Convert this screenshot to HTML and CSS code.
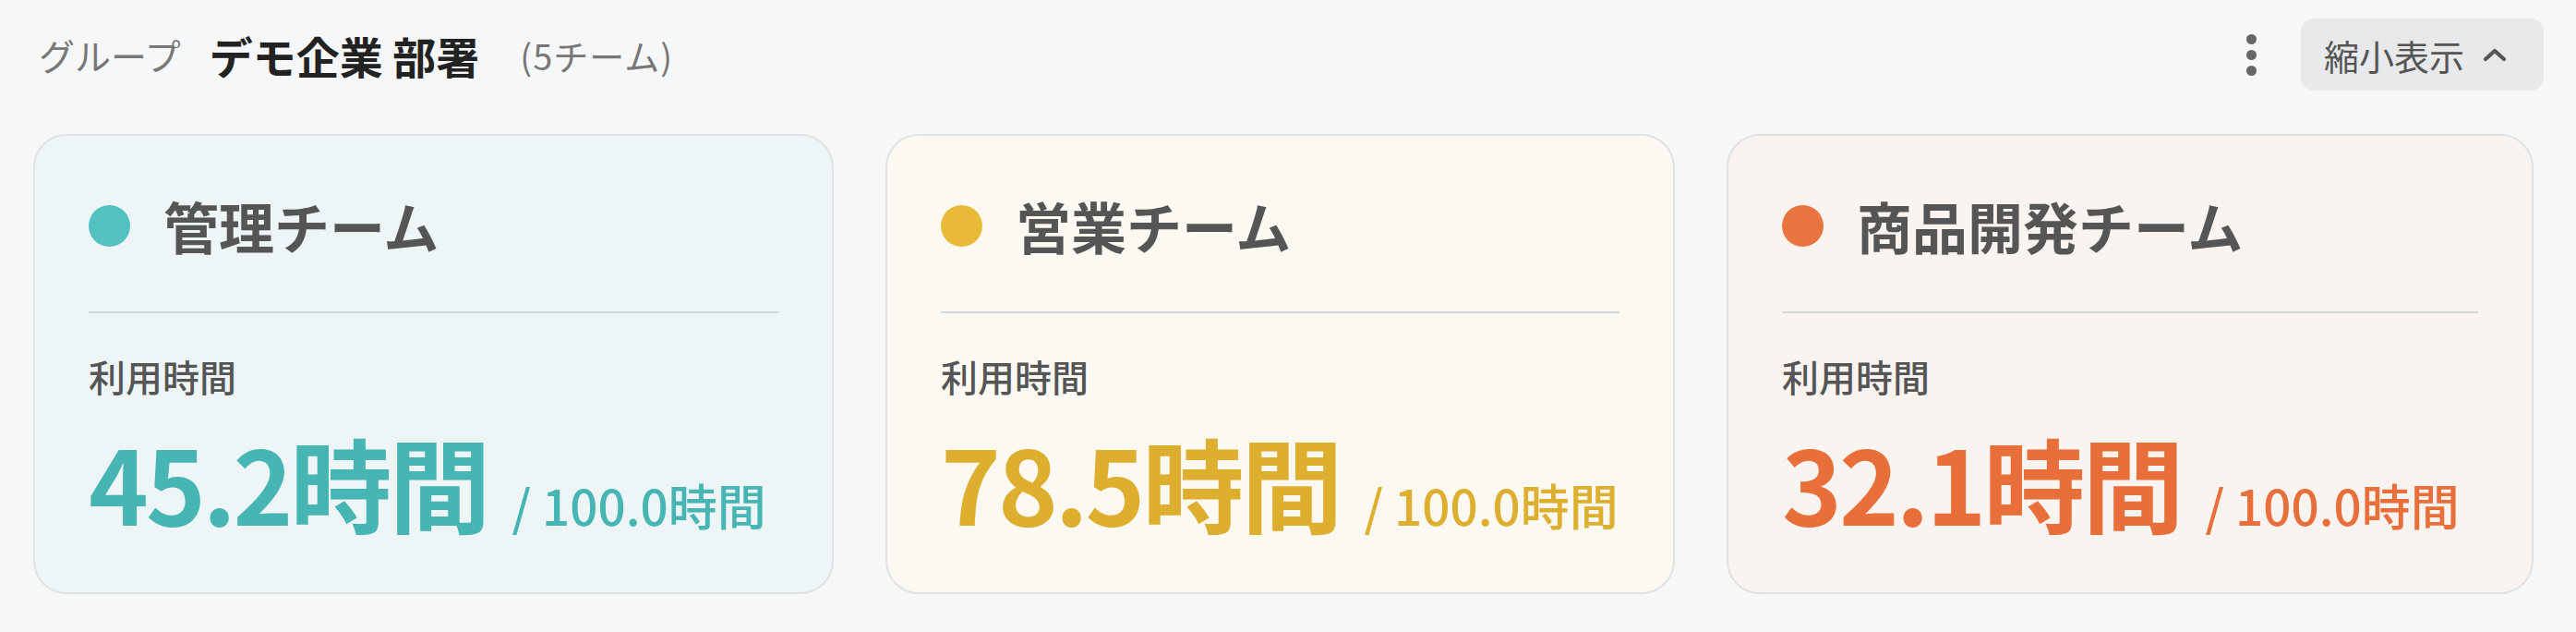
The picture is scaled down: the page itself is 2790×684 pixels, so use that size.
FILE: index.html
```html
<!DOCTYPE html>
<html lang="ja">
<head>
<meta charset="utf-8">
<title>グループ</title>
<link rel="stylesheet" href="styles.css">
</head>
<body>
<div class="page">
  <header class="header">
    <div class="header-left">
      <span class="group-label">グループ</span>
      <h1 class="group-title">デモ企業 部署</h1>
      <span class="group-count">(5チーム)</span>
    </div>
    <div class="header-right">
      <button class="more" aria-label="more">
        <span class="dot-s"></span><span class="dot-s"></span><span class="dot-s"></span>
      </button>
      <button class="collapse">
        <span>縮小表示</span>
        <svg class="chev" width="26" height="16" viewBox="0 0 26 16"><path d="M3 13 L13 4 L23 13" fill="none" stroke="#555" stroke-width="4.2" stroke-linecap="round" stroke-linejoin="round"/></svg>
      </button>
    </div>
  </header>
  <section class="cards">
    <article class="card teal">
      <div class="card-head"><span class="dot"></span><h2 class="card-title">管理チーム</h2></div>
      <hr class="divider">
      <div class="label">利用時間</div>
      <div class="value"><span class="big">45.2時間</span><span class="small">/ 100.0時間</span></div>
    </article>
    <article class="card yellow">
      <div class="card-head"><span class="dot"></span><h2 class="card-title">営業チーム</h2></div>
      <hr class="divider">
      <div class="label">利用時間</div>
      <div class="value"><span class="big">78.5時間</span><span class="small">/ 100.0時間</span></div>
    </article>
    <article class="card orange">
      <div class="card-head"><span class="dot"></span><h2 class="card-title">商品開発チーム</h2></div>
      <hr class="divider">
      <div class="label">利用時間</div>
      <div class="value"><span class="big">32.1時間</span><span class="small">/ 100.0時間</span></div>
    </article>
  </section>
</div>
</body>
</html>
```
FILE: styles.css
```css
* { box-sizing: border-box; }
html, body { margin: 0; padding: 0; }
body {
  background: #f6f7f8;
  font-family: "Noto Sans CJK JP", "Noto Sans", sans-serif;
  color: #333;
}
.page {
  padding: 20px 40px 0 36px;
}
.header {
  height: 78px;
  display: flex;
  align-items: center;
  justify-content: space-between;
}
.header-left {
  display: flex;
  align-items: center;
  padding-left: 6px;
}
.group-label {
  font-size: 39px;
  color: #777;
  font-weight: 400;
}
.group-title {
  margin: 0 0 0 31px;
  font-size: 47px;
  font-weight: 700;
  color: #222;
}
.group-count {
  margin-left: 44px;
  font-size: 38px;
  color: #777;
  letter-spacing: 1px;
}
.header-right {
  display: flex;
  align-items: center;
  gap: 48px;
  margin-right: -5px;
}
.more {
  border: 0;
  background: transparent;
  padding: 0;
  display: flex;
  flex-direction: column;
  gap: 6px;
  align-items: center;
}
.dot-s {
  width: 11px;
  height: 11px;
  border-radius: 50%;
  background: #666;
}
.collapse {
  height: 78px;
  width: 263px;
  border: 0;
  border-radius: 14px;
  background: #e8e9ea;
  display: flex;
  align-items: center;
  padding: 0 0 0 25px;
  gap: 20px;
  font-family: inherit;
  font-size: 38px;
  color: #555;
}
.chev { display: block; }
.cards {
  margin-top: 47px;
  display: grid;
  grid-template-columns: 867px 855px 874px;
  column-gap: 56px;
}
.card {
  height: 498px;
  border-radius: 36px;
  border: 2px solid #dfe2e3;
  padding: 62px 58px 0 58px;
}
.card.teal { background: #eef5f6; }
.card.yellow { background: #fbf9f2; }
.card.orange { background: #faf4f1; }
.card-head {
  display: flex;
  align-items: center;
  gap: 36px;
  height: 70px;
}
.dot {
  width: 45px;
  height: 45px;
  border-radius: 50%;
  flex: none;
}
.teal .dot { background: #52c1c0; }
.yellow .dot { background: #e9ba38; }
.orange .dot { background: #e9743f; }
.card-title {
  margin: 0;
  font-size: 60px;
  font-weight: 700;
  color: #555;
  line-height: 70px;
}
.divider {
  margin: 58px 0 0 0;
  border: 0;
  height: 2px;
  background: #d2d6d7;
}
.label {
  margin-top: 40px;
  font-size: 40px;
  line-height: 56px;
  color: #555;
  font-weight: 500;
}
.value {
  margin-top: 20px;
  display: flex;
  align-items: baseline;
  line-height: 1.2;
  font-weight: 700;
  white-space: nowrap;
}
.big {
  font-size: 110px;
  letter-spacing: -3px;
}
.small {
  font-size: 53px;
  margin-left: 26px;
  font-weight: 500;
  letter-spacing: 0;
}
.teal .value { color: #46b5b4; }
.yellow .value { color: #deae2f; }
.orange .value { color: #e86f3a; }
```
